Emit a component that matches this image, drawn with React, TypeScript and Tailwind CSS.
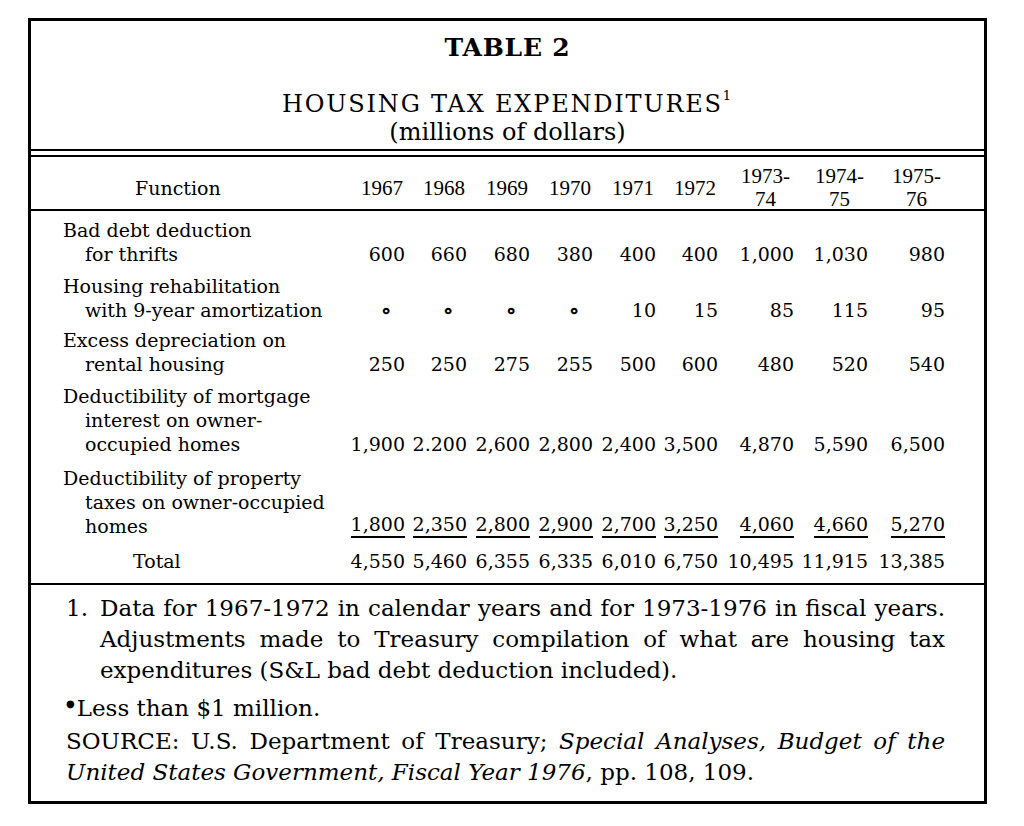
import React from 'react';

const serif = { fontFamily: '"DejaVu Serif", "Liberation Serif", serif' };
const times = { fontFamily: '"Liberation Serif", serif' };

const cols = 'grid grid-cols-[312px_62px_62px_63px_63px_63px_62px_76px_74px_77px]';

type Row = { label: string[]; values: string[]; underline?: boolean; gap?: string };

const rows: Row[] = [
  {
    label: ['Bad debt deduction', 'for thrifts'],
    values: ['600', '660', '680', '380', '400', '400', '1,000', '1,030', '980'],
  },
  {
    label: ['Housing rehabilitation', 'with 9-year amortization'],
    values: ['*', '*', '*', '*', '10', '15', '85', '115', '95'],
  },
  {
    label: ['Excess depreciation on', 'rental housing'],
    values: ['250', '250', '275', '255', '500', '600', '480', '520', '540'],
    gap: '-mt-[2px]',
  },
  {
    label: ['Deductibility of mortgage', 'interest on owner-', 'occupied homes'],
    values: ['1,900', '2.200', '2,600', '2,800', '2,400', '3,500', '4,870', '5,590', '6,500'],
  },
  {
    label: ['Deductibility of property', 'taxes on owner-occupied', 'homes'],
    values: ['1,800', '2,350', '2,800', '2,900', '2,700', '3,250', '4,060', '4,660', '5,270'],
    underline: true,
    gap: 'mt-[2px]',
  },
];

const totals = ['4,550', '5,460', '6,355', '6,335', '6,010', '6,750', '10,495', '11,915', '13,385'];

function Cell({ value, underline }: { value: string; underline?: boolean }) {
  if (value === '*') {
    return <div className="self-end text-right pr-[13px] leading-[24px] text-[22px] font-bold">∘</div>;
  }
  return (
    <div className="self-end text-right leading-[24px]">
      <span className={underline ? 'inline-block border-b-2 border-black' : ''}>{value}</span>
    </div>
  );
}

function Year({ top, bottom }: { top: string; bottom?: string }) {
  if (!bottom) {
    return <div className="text-right pr-[2px] leading-[23px]">{top}</div>;
  }
  return (
    <div className="flex justify-end pr-[4px]">
      <div className="flex flex-col items-center leading-[23px]">
        <span>{top}</span>
        <span>{bottom}</span>
      </div>
    </div>
  );
}

export default function App() {
  return (
    <div className="w-[1024px] h-[826px] bg-white pt-[18px] pl-[28px] text-black" style={serif}>
      <div className="w-[959px] h-[786px] border-[3px] border-black flex flex-col">
        {/* title */}
        <div className="h-[128px] flex flex-col items-center pt-[12px]">
          <div className="text-[25px] font-bold leading-[30px] tracking-[0.8px]">TABLE 2</div>
          <div className="mt-[27px] text-[24px] leading-[28px] tracking-[1.8px]">
            HOUSING TAX EXPENDITURES<sup className="text-[13px] -top-[0.9em]">1</sup>
          </div>
          <div className="text-[24px] leading-[28px]">(millions of dollars)</div>
        </div>
        <div className="h-[2px] bg-black" />
        <div className="h-[4px]" />

        {/* header */}
        <div className={`${cols} items-center h-[56px] border-y-2 border-black pt-[8px]`}>
          <div className="pl-[104px] text-[19px] leading-[23px]">Function</div>
          {['1967', '1968', '1969', '1970', '1971', '1972'].map((y) => (
            <div key={y} className="text-[21px]" style={times}>
              <Year top={y} />
            </div>
          ))}
          {[
            ['1973-', '74'],
            ['1974-', '75'],
            ['1975-', '76'],
          ].map(([a, b]) => (
            <div key={a} className="text-[21px]" style={times}>
              <Year top={a} bottom={b} />
            </div>
          ))}
        </div>

        {/* body */}
        <div className="flex flex-col gap-[8px] pt-[7px] pb-[10px] text-[19px]">
          {rows.map((r) => (
            <div key={r.label[0]} className={`${cols} ${r.gap ?? ''}`}>
              <div className="pl-[32px] leading-[24px]">
                {r.label.map((l, i) => (
                  <div key={l} className={i > 0 ? 'pl-[22px] whitespace-nowrap' : 'whitespace-nowrap'}>
                    {l}
                  </div>
                ))}
              </div>
              {r.values.map((v, i) => (
                <Cell key={i} value={v} underline={r.underline} />
              ))}
            </div>
          ))}
          <div className={`${cols} mt-[3px]`}>
            <div className="pl-[102px] leading-[24px]">Total</div>
            {totals.map((v, i) => (
              <Cell key={i} value={v} />
            ))}
          </div>
        </div>

        {/* notes */}
        <div className="flex-1 border-t-2 border-black pl-[35px] pr-[39px] pt-[8px] text-[23px] leading-[31px]">
          <div className="flex">
            <span className="w-[34px] shrink-0">1.</span>
            <div className="flex-1">
              <div className="text-justify [text-align-last:justify] whitespace-nowrap">
                Data for 1967-1972 in calendar years and for 1973-1976 in fiscal years.
              </div>
              <div className="text-justify [text-align-last:justify]">
                Adjustments made to Treasury compilation of what are housing tax
              </div>
              <div>expenditures (S&amp;L bad debt deduction included).</div>
            </div>
          </div>
          <div className="mt-[7px] h-[31px]">
            <span className="relative -top-[9px] text-[10px] leading-none mr-[2px]">●</span>Less than $1 million.
          </div>
          <div className="mt-[2px]">
            <div className="text-justify [text-align-last:justify]">
              SOURCE: U.S. Department of Treasury; <i>Special Analyses, Budget of the</i>
            </div>
            <div>
              <i>United States Government, Fiscal Year 1976</i>, pp. 108, 109.
            </div>
          </div>
        </div>
      </div>
    </div>
  );
}
